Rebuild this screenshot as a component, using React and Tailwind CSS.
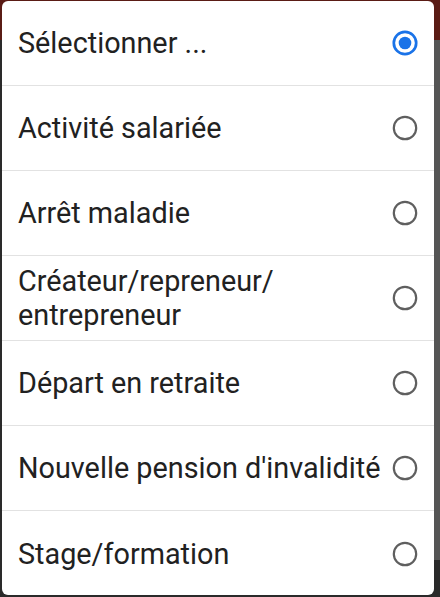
const options = [
  { label: 'Sélectionner ...', selected: true },
  { label: 'Activité salariée' },
  { label: 'Arrêt maladie' },
  { label: ['Créateur/repreneur/', 'entrepreneur'] },
  { label: 'Départ en retraite' },
  { label: "Nouvelle pension d'invalidité" },
  { label: 'Stage/formation' },
];

function Radio({ checked }) {
  return (
    <svg width="26" height="26" viewBox="0 0 26 26" className="shrink-0">
      {checked ? (
        <>
          <circle cx="13" cy="13" r="11.2" fill="none" stroke="#1a73e8" strokeWidth="2.7" />
          <circle cx="13" cy="13" r="6.3" fill="#1a73e8" />
        </>
      ) : (
        <circle cx="13" cy="13" r="11.2" fill="none" stroke="#5f5f5f" strokeWidth="2.2" />
      )}
    </svg>
  );
}

export default function App() {
  return (
    <div className="w-[440px] h-[597px] bg-[#2a2a2a] relative overflow-hidden">
      <div className="absolute top-0 left-0 right-0 h-[40px] bg-[#5a1c15]" />
      <div className="absolute top-[40px] right-0 w-[8px] h-[520px] bg-[#555]" />
      <div className="relative mt-[1px] ml-[2px] w-[432px] h-[594px] bg-white rounded-[6px] overflow-hidden" style={{ fontFamily: 'Roboto, "Noto Sans", sans-serif' }}>
        {options.map((opt, i) => (
          <div
            key={i}
            className={
              'h-[85px] flex items-center justify-between pl-[16px] pr-[16px] ' +
              (i < options.length - 1 ? 'border-b border-[#e2e2e2]' : '')
            }
          >
            <div className="text-[28.8px] leading-[34px] text-[#212121]">
              {Array.isArray(opt.label) ? (
                <>
                  {opt.label[0]}
                  <br />
                  {opt.label[1]}
                </>
              ) : (
                opt.label
              )}
            </div>
            <Radio checked={opt.selected} />
          </div>
        ))}
      </div>
    </div>
  );
}
